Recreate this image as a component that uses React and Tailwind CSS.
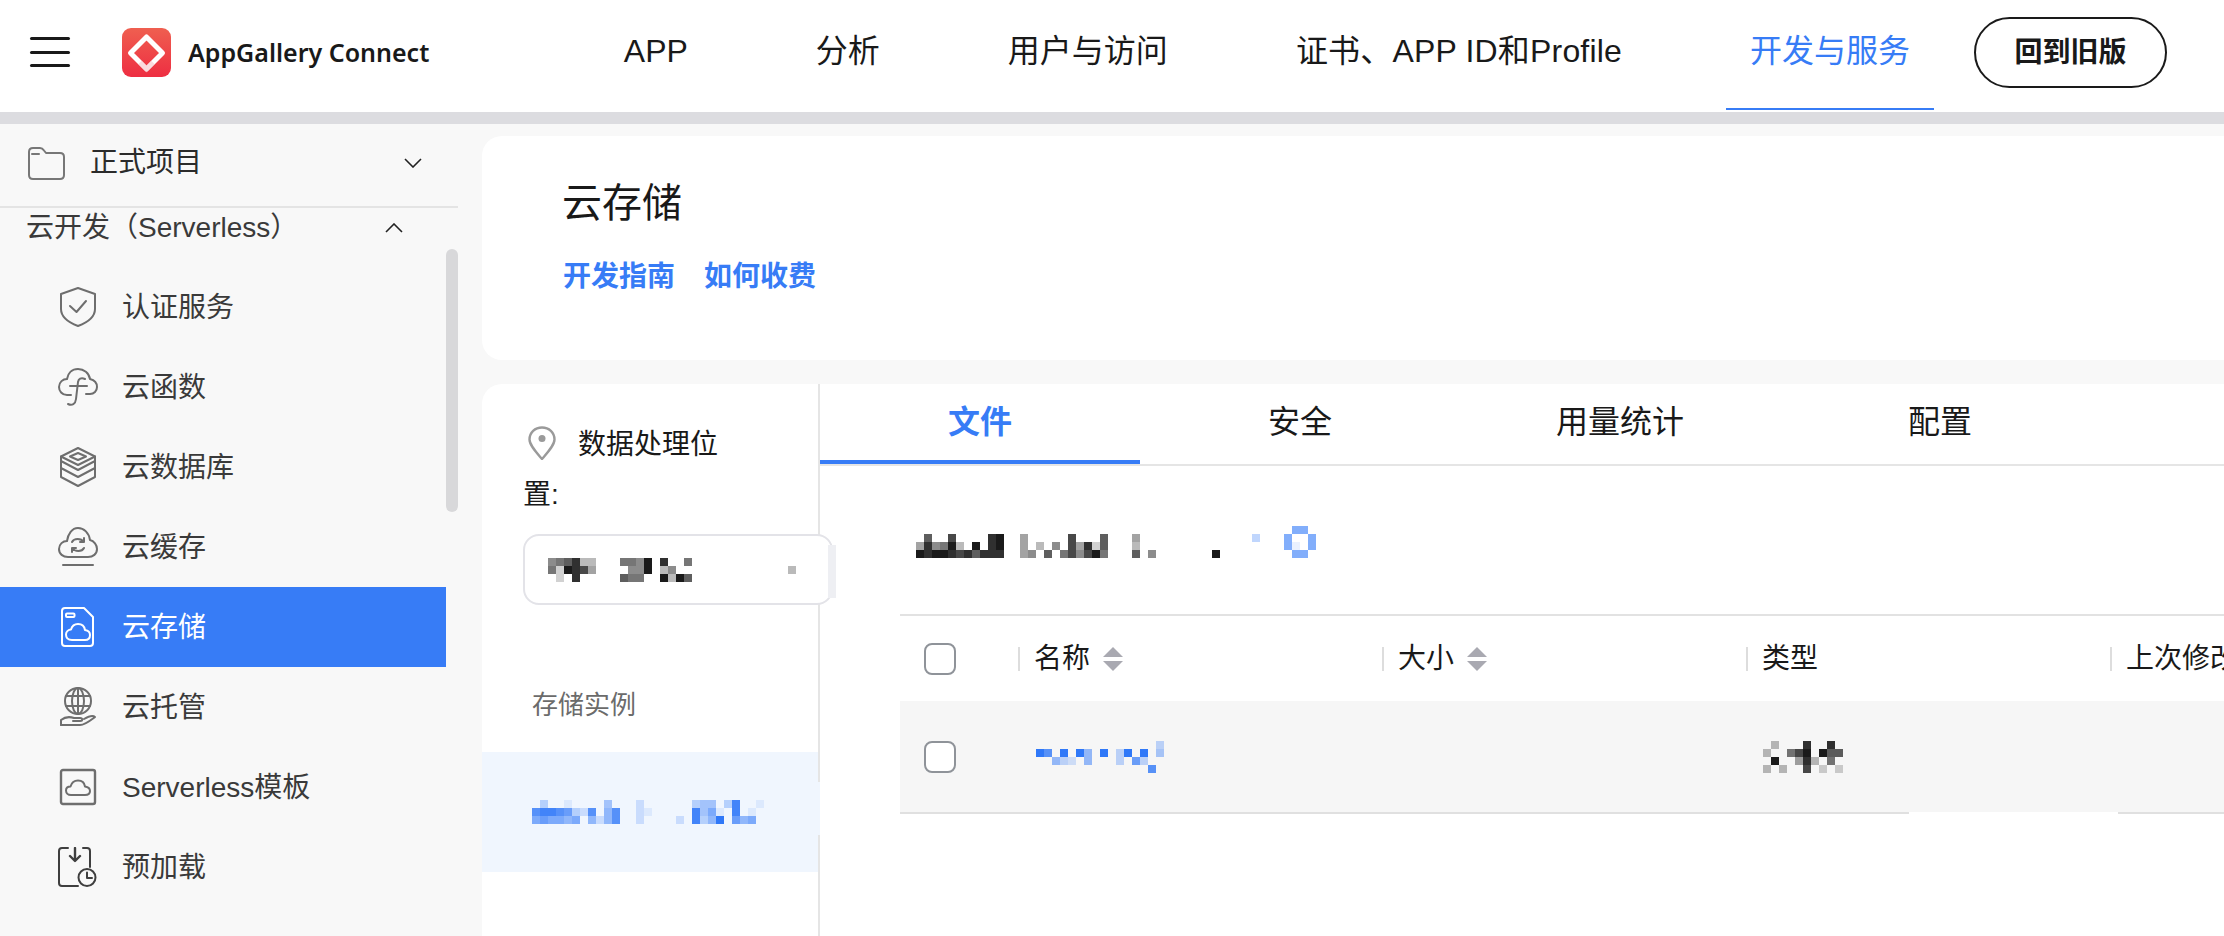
// pixelated (redacted) bits of the screenshot: digit = dark cell, letter = blue cell
const Mosaic = ({ rows }) => {
  const cols = Math.max(...rows.map((r) => r.length));
  return (
    <svg width={cols * 8} height={rows.length * 8} shapeRendering="crispEdges" className="shrink-0">
      {rows.map((row, y) =>
        row.split("").map((c, x) => {
          if (c === ".") return null;
          const isDigit = c >= "0" && c <= "9";
          const level = isDigit ? Number(c) : c.charCodeAt(0) - 97;
          return (
            <rect
              key={x + "-" + y}
              x={x * 8}
              y={y * 8}
              width="8"
              height="8"
              fill={isDigit ? "#1a1a1a" : "#2f78f8"}
              fillOpacity={(level + 1) / 10}
            />
          );
        })
      )}
    </svg>
  );
};

const Icon = ({ children, className = "" }) => (
  <svg
    viewBox="0 0 40 40"
    width="40"
    height="40"
    fill="none"
    stroke="currentColor"
    strokeWidth="2"
    strokeLinecap="round"
    strokeLinejoin="round"
    className={"shrink-0 " + className}
  >
    {children}
  </svg>
);

const ShieldIcon = () => (
  <Icon>
    <path d="M20 1 L37 7 V22 C37 31 28 36 20 39 C12 36 3 31 3 22 V7 Z" />
    <path d="M12 19 L18.5 25 L28 14" />
  </Icon>
);
const CloudFnIcon = () => (
  <Icon>
    <path d="M13 28 H9 C4 28 1 24 1 20 C1 15 5 12 9 12 C10 6 14 2 20 2 C26 2 31 6 32 12 C36 13 39 16 39 20 C39 24 36 27 32 27 H28" />
    <path d="M27 12 C23 10 20.5 12 20 15 L18 32 C17.5 37 14 39 10 37" />
    <path d="M12 19 H29" />
  </Icon>
);
const LayersIcon = () => (
  <Icon>
    <path d="M20 1 L37 9.5 L20 18 L3 9.5 Z" />
    <path d="M20 6 L28 9.5 L20 13 L12 9.5 Z" />
    <path d="M3 9.5 V14 L20 23 L37 14 V9.5" />
    <path d="M3 14 V21 L20 30 L37 21 V14" />
    <path d="M3 21 V30 L20 39 L37 30 V21" />
  </Icon>
);
const CloudCacheIcon = () => (
  <Icon>
    <path d="M10 30 C5 30 1 27 1 22 C1 17 5 14 9 14 C10 7 14 1 20 1 C26 1 31 6 32 13 C36 14 39 18 39 22 C39 27 35 30 30 30 Z" />
    <path d="M14 15 C16 11 23 11 26 15 M26 11 V15 H22" />
    <path d="M26 21 C24 25 17 25 14 21 M14 25 V21 H18" />
    <path d="M5 38 H35" />
  </Icon>
);
const StorageIcon = () => (
  <Icon>
    <path d="M7 1 H26 L35 10 V36 C35 38 34 39 32 39 H7 C5 39 4 38 4 36 V4 C4 2 5 1 7 1 Z" />
    <rect x="8" y="6.5" width="8.5" height="3.5" rx="1" />
    <path d="M14 33 C10.5 33 8 31 8 27.5 C8 24.5 10.5 22.5 13 22.5 C14 19 16.5 17 20 17 C24 17 26.5 19.5 27 23 C30 23.5 32 25 32 28 C32 31 30 33 27 33 Z" />
  </Icon>
);
const GlobeHandIcon = () => (
  <Icon>
    <circle cx="20" cy="14" r="13" />
    <ellipse cx="20" cy="14" rx="6" ry="13" />
    <path d="M20 1 V27 M8 9 H32 M8 19 H32" />
    <path d="M3 38 V33 C8 29 13 30 16 31 H22 C25 31 25 34 22 34 H15" />
    <path d="M3 38 H22 C27 38 33 33 37 30 C35 28 31 29 26 32" />
  </Icon>
);
const TemplateIcon = () => (
  <Icon>
    <rect x="3" y="3" width="34" height="34" rx="2" strokeWidth="2.4" />
    <path d="M13 28 C10 28 8 26 8 23.5 C8 21 10 19.5 12.5 19.5 C13.5 16 16 13.5 20 13.5 C24 13.5 26.5 16 27 19.5 C30 20 32 21.5 32 24 C32 26.5 30 28 27 28 Z" />
  </Icon>
);
const PreloadIcon = () => (
  <Icon>
    <path d="M10 1 H4 C2 1 1 2 1 4 V36 C1 38 2 39 4 39 H20" />
    <path d="M25 1 H29 C31 1 32 2 32 4 V20" />
    <path d="M17 1 V13 M12 9 L17 14 L22 9" strokeWidth="2.4" />
    <circle cx="29" cy="30.5" r="8.5" />
    <path d="M29 25.5 V31 H34" />
  </Icon>
);

const menu = [
  { name: "认证服务", icon: ShieldIcon },
  { name: "云函数", icon: CloudFnIcon },
  { name: "云数据库", icon: LayersIcon },
  { name: "云缓存", icon: CloudCacheIcon },
  { name: "云存储", icon: StorageIcon, active: true },
  { name: "云托管", icon: GlobeHandIcon },
  { name: "Serverless模板", icon: TemplateIcon },
  { name: "预加载", icon: PreloadIcon, dark: true },
];

const Sidebar = () => (
  <aside className="w-[458px] shrink-0 flex flex-col text-[#3a3a3a] text-[28px]">
    <div className="h-[84px] shrink-0 flex items-center pl-[27px] pr-[36px] pb-1 border-b-2 border-[#e4e4e4] text-[#2b2b2b]">
      <svg viewBox="0 0 38 33" width="38" height="33" fill="none" stroke="#777" strokeWidth="2" strokeLinejoin="round" strokeLinecap="round" className="shrink-0">
        <path d="M2 28 V5 C2 2.5 3.5 1 6 1 H13 C15 1 16 2 17 3.5 L19 6 H33 C35.5 6 37 7.5 37 10 V28 C37 30.5 35.5 32 33 32 H6 C3.5 32 2 30.5 2 28 Z" />
        <path d="M5 7 H12" />
      </svg>
      <span className="ml-[25px] flex-1">正式项目</span>
      <svg viewBox="0 0 18 10" width="18" height="10" fill="none" stroke="#222" strokeWidth="1.6">
        <path d="M1 1 L9 9 L17 1" />
      </svg>
    </div>
    <div className="flex flex-1 min-h-0">
      <div className="w-[446px]">
        <div className="h-10 flex items-center justify-between pl-[26px] pr-[43px]">
          <span>云开发（Serverless）</span>
          <svg viewBox="0 0 18 10" width="18" height="10" fill="none" stroke="#222" strokeWidth="1.6">
            <path d="M1 9 L9 1 L17 9" />
          </svg>
        </div>
        <ul className="mt-[19px]">
          {menu.map((item) => (
            <li
              key={item.name}
              className={
                "h-20 flex items-center pl-[58px] gap-6 " +
                (item.active ? "bg-[#377cf6] text-white" : "")
              }
            >
              <span className={item.active ? "text-white" : item.dark ? "text-[#3f3f3f]" : "text-[#6e6e6e]"}>
                <item.icon />
              </span>
              <span className="pt-0.5">{item.name}</span>
            </li>
          ))}
        </ul>
      </div>
      <div className="w-3">
        <div className="mt-[41px] h-[263px] rounded-md bg-[#d8d8da]" />
      </div>
    </div>
  </aside>
);

const Header = () => (
  <header className="h-[112px] shrink-0 bg-white flex items-center text-[#191919]">
    <div className="ml-[30px] mb-2 w-10 flex flex-col gap-[10.5px]">
      <span className="h-[3px] rounded-full bg-[#191919]" />
      <span className="h-[3px] rounded-full bg-[#191919]" />
      <span className="h-[3px] rounded-full bg-[#191919]" />
    </div>
    <svg viewBox="0 0 49 49" width="49" height="49" className="ml-[52px] mb-[7px] shrink-0">
      <defs>
        <linearGradient id="logo-bg" x1="0" y1="0" x2="0" y2="1">
          <stop offset="0" stopColor="#ef5f50" />
          <stop offset="1" stopColor="#ee2e42" />
        </linearGradient>
      </defs>
      <rect width="49" height="49" rx="9" fill="url(#logo-bg)" />
      <path d="M24.5 9 L40.5 25 L24.5 41 L8.5 25 Z" fill="none" stroke="#fff" strokeWidth="5" strokeLinejoin="round" />
      <path d="M18 34.5 L24.5 41 L31 34.5" fill="none" stroke="#f6b9c0" strokeWidth="5" strokeOpacity="0.5" />
    </svg>
    <span className="ml-[17px] mb-[7px] font-['Noto_Sans'] text-[25px] font-semibold whitespace-nowrap">AppGallery Connect</span>
    <nav className="ml-auto flex items-center gap-20 text-[32px] whitespace-nowrap">
      {["APP", "分析", "用户与访问", "证书、APP ID和Profile", "开发与服务"].map((name, i) => (
        <a
          key={name}
          className={
            "h-[110px] mb-[2px] px-6 pb-1.5 flex items-center border-b-2 " +
            (i === 3 ? "tracking-[0.18px] " : "") +
            (i === 4 ? "border-[#377cf6] text-[#377cf6]" : "border-transparent")
          }
        >
          {name}
        </a>
      ))}
    </nav>
    <button className="ml-10 mr-[57px] mb-[7px] w-[193px] h-[71px] rounded-full border-2 border-[#1a1a1a] text-[28px] font-semibold">
      回到旧版
    </button>
  </header>
);

const Checkbox = () => (
  <span className="block w-8 h-8 rounded-lg border-2 border-[#8f9399] bg-white" />
);

const Sort = () => (
  <svg viewBox="0 0 20 24" width="20" height="24" fill="#a9a9b1" className="ml-[13px] shrink-0">
    <path d="M10 0 L20 10 H0 Z" />
    <path d="M0 14 H20 L10 24 Z" />
  </svg>
);

const columns = [
  { name: "名称", sort: true },
  { name: "大小", sort: true },
  { name: "类型" },
  { name: "上次修改时间" },
];

const gridCols = "grid grid-cols-[118px_364px_364px_364px_364px]";

const FileTable = () => (
  <div className="mt-14 border-t-2 border-[#e2e2e2] text-[#191919] text-[28px]">
    <div className={gridCols + " h-[85px] items-center"}>
      <div className="pl-6"><Checkbox /></div>
      {columns.map((col) => (
        <div key={col.name} className="flex items-center whitespace-nowrap">
          <span className="h-6 w-0.5 bg-[#dddddd] mr-[14px] shrink-0" />
          <span className="pt-px">{col.name}</span>
          {col.sort && <Sort />}
        </div>
      ))}
    </div>
    <div className={gridCols + " relative h-[113px] items-center bg-[#f6f6f6] border-b-2 border-[#e0e0e0]"}>
      <div className="pl-6"><Checkbox /></div>
      <div className="pl-[18px]">
        <Mosaic rows={["...............c", "jh.j.je.j.cj.j.d", "..ecb.e...c.gc", "..............h"]} />
      </div>
      <div />
      <div className="pl-[17px]">
        <Mosaic rows={[".2...8..8.", "2..579.966", ".9..382.5.", "2.2..7.1.1"]} />
      </div>
      <div />
      <span className="absolute -bottom-0.5 left-[1009px] w-[209px] h-0.5 bg-white" />
    </div>
  </div>
);

const Storage = () => (
  <div className="flex-1 min-h-0 flex rounded-tl-[20px] bg-white">
    <div className="w-[338px] shrink-0 border-r-2 border-[#e5e5e5]">
      <p className="pl-[41px] pt-[36px] w-[250px] text-[28px] leading-[50px] text-[#191919]">
        <svg viewBox="0 0 28 34" width="28" height="34" fill="none" stroke="#9a9a9a" strokeWidth="2.4" className="inline-block align-[-6px] ml-[5px] mr-[22px]">
          <path d="M14 33 C8 26 1.5 19 1.5 13.5 C1.5 6.5 7 1.5 14 1.5 C21 1.5 26.5 6.5 26.5 13.5 C26.5 19 20 26 14 33 Z" />
          <circle cx="14" cy="12.5" r="3.5" fill="#9a9a9a" stroke="none" />
        </svg>
        数据处理位置:
      </p>
      <div className="relative z-10 mt-[14px] ml-[41px] w-[310px] h-[71px] flex items-center pl-[23px] rounded-2xl border-2 border-[#e3e3e8] bg-white">
        <Mosaic rows={["456822...5549.8..5", "519873....449.24..............2", ".1.8.....655..9296"]} />
        <span className="absolute -right-[5px] top-[9px] w-2 h-[53px] bg-[#eeeff3]" />
      </div>
      <p className="mt-20 pl-[50px] text-[26px] leading-10 text-[#6b6b6b]">存储实例</p>
      <div className="relative z-10 mt-[27px] h-[120px] flex items-center pl-[50px] bg-[#f0f6fe]">
        <Mosaic rows={[".c..a....d...b......cdd.ci..a", "hiihgcbh.eh..ba.....idfa.i.a", "fgffef.ebeh..b....b.icej.gef"]} />
        <span className="absolute -right-0.5 top-[30px] w-0.5 h-[53px] bg-[#f0f6fe]" />
      </div>
    </div>
    <div className="flex-1 min-w-0 overflow-hidden">
      <div className="h-[82px] flex border-b-2 border-[#e5e5e5] text-[32px] text-[#191919]">
        {["文件", "安全", "用量统计", "配置"].map((tab, i) => (
          <div
            key={tab}
            className={
              "w-80 h-20 flex items-center justify-center border-b-4 " +
              (i === 0 ? "border-[#377cf6] text-[#377cf6] font-semibold" : "border-transparent")
            }
          >
            {tab}
          </div>
        ))}
      </div>
      <div className="pl-20 pt-[60px]">
        <div className="pl-4">
          <Mosaic
            rows={[
              "...............................................ff",
              ".6..7....89..3.....7...6...3..............c...f..f",
              "384592.9.89..3.2.4.73816...2..................fa.f",
              "98998786888..34.6.574795...6.4.......9.........ff",
            ]}
          />
        </div>
        <FileTable />
      </div>
    </div>
  </div>
);

export default function App() {
  return (
    <div className="w-[2224px] h-[936px] overflow-hidden flex flex-col bg-[#f8f8f8] font-['Liberation_Sans','Noto_Sans_CJK_SC',sans-serif]">
      <Header />
      <div className="h-3 shrink-0 bg-[#dcdce0]" />
      <div className="flex-1 min-h-0 flex">
        <Sidebar />
        <main className="flex-1 min-w-0 flex flex-col gap-6 pl-6 pt-3">
          <section className="h-56 shrink-0 bg-white rounded-l-[20px] pl-20 pt-[38px]">
            <h1 className="text-[40px] leading-[58px] text-[#191919]">云存储</h1>
            <div className="mt-[25px] ml-px flex gap-[29px] text-[28px] leading-10 font-semibold text-[#377cf6]">
              <a>开发指南</a>
              <a>如何收费</a>
            </div>
          </section>
          <Storage />
        </main>
      </div>
    </div>
  );
}
